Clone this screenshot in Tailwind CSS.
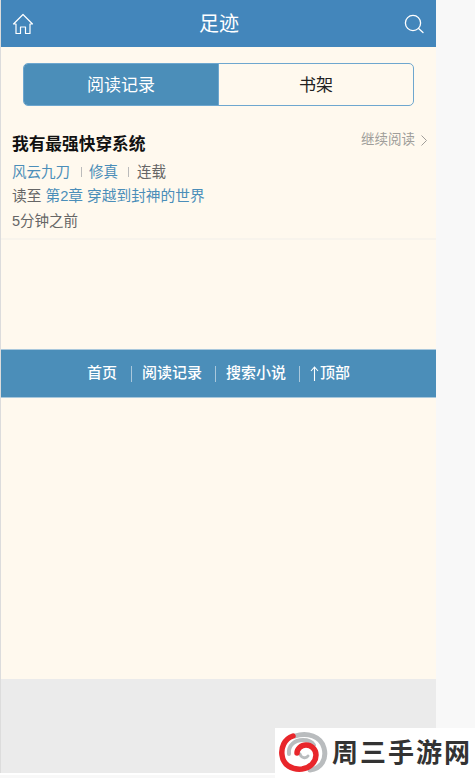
<!DOCTYPE html>
<html lang="zh-CN">
<head>
  <meta charset="UTF-8">
  <meta name="viewport" content="width=device-width, initial-scale=1.0">
  <title>足迹</title>
  <script src="https://cdn.jsdelivr.net/npm/@tailwindcss/browser@4"></script>
</head>
<body class="bg-[#f8f8f8] h-[778px] overflow-hidden relative font-['Liberation_Sans','Noto_Sans_CJK_SC',sans-serif]">

  <div class="w-[436px] h-[773px] border-l border-[#dcdcdc] bg-[#ebebeb] flex flex-col">
    <div class="bg-[#fff9ee] h-[679px] flex flex-col">

      <!-- Header -->
      <header class="h-[47px] bg-[#4386bb] flex items-center justify-between pl-[11px] pr-[12px] text-white">
        <svg class="w-[22px] h-[22px]" viewBox="0 0 22 22" fill="none" stroke="currentColor" stroke-width="1.2" stroke-linejoin="round">
          <path d="M1.5 11 L11 1.5 L20.5 11 H18 V20.5 H13.5 V14 H8.5 V20.5 H4 V11 Z"/>
        </svg>
        <h1 class="text-[20px] leading-none">足迹</h1>
        <svg class="w-[20px] h-[20px]" viewBox="0 0 20 20" fill="none" stroke="currentColor" stroke-width="1.3" stroke-linecap="round">
          <circle cx="9" cy="9" r="7.6"/>
          <path d="M14.6 14.6 L19 18.6"/>
        </svg>
      </header>

      <!-- Tabs -->
      <div class="mt-4 mx-[22px] h-[43px] flex border border-[#6ea7cf] rounded-[5px] overflow-hidden">
        <div class="w-[195px] bg-[#4b8eb9] border-r border-[#6ea7cf] text-white flex items-center justify-center text-[17px] pt-[3px]">阅读记录</div>
        <div class="flex-1 text-[#222] flex items-center justify-center text-[17px] pt-[3px]">书架</div>
      </div>

      <!-- Reading record -->
      <div class="mt-[18px] h-[116px] px-[11px] border-b-2 border-[#f8f4ec] relative">
        <h2 class="pt-[9px] text-[16.7px] leading-6 font-bold text-[#111]">我有最强快穿系统</h2>
        <a class="absolute right-[9px] top-[6px] flex items-center gap-[6px] text-[13.5px] leading-5 text-[#a09e9a]">继续阅读
          <svg class="w-[6px] h-[11px]" viewBox="0 0 6 11" fill="none" stroke="currentColor" stroke-width="1"><path d="M0.5 0.5 L5.5 5.5 L0.5 10.5"/></svg>
        </a>
        <div class="mt-[5px] flex items-center text-[14.5px] leading-5 text-[#666]">
          <span class="text-[#4b8eb9]">风云九刀</span>
          <span class="ml-[11px] mr-[7px] w-px h-[10px] bg-[#bbb]"></span>
          <span class="text-[#4b8eb9]">修真</span>
          <span class="ml-[10px] mr-[8px] w-px h-[10px] bg-[#bbb]"></span>
          <span>连载</span>
        </div>
        <p class="mt-[4px] text-[14.7px] leading-5 text-[#666]">读至 <span class="text-[#4b8eb9]">第2章 穿越到封神的世界</span></p>
        <p class="mt-[5px] text-[14.5px] leading-5 text-[#666]">5分钟之前</p>
      </div>

      <!-- Footer nav -->
      <nav class="mt-[109px] h-[49px] bg-[#4b8eb9] border-y border-[#a9c8dc] flex items-center pl-[86px] text-[15px] font-medium text-white">
        <span class="pr-[14px]">首页</span>
        <span class="w-px h-[16px] bg-[#a9c8dc]"></span>
        <span class="pl-[10px] pr-[13px]">阅读记录</span>
        <span class="w-px h-[16px] bg-[#a9c8dc]"></span>
        <span class="pl-[10px] pr-[13px]">搜索小说</span>
        <span class="w-px h-[16px] bg-[#a9c8dc]"></span>
        <span class="pl-[9px] flex items-center">
          <svg class="w-[11px] h-[15px]" viewBox="0 0 11 15" fill="none" stroke="currentColor" stroke-width="1.1"><path d="M5.5 1 V15 M2 5 L5.5 1 L9 5"/></svg>
          顶部
        </span>
      </nav>
    </div>
  </div>
  <div class="h-[2px] w-[275px] bg-white"></div>

  <!-- Watermark logo -->
  <div class="absolute left-[275px] top-[728px] w-[200px] h-[50px] bg-white flex items-center">
    <svg class="w-[57px] h-[50px] shrink-0" viewBox="0 0 57 50" fill="none" stroke-linecap="round">
      <path d="M20 8 C32 4 46 8 49 20 C52 31 46 41 35 42" stroke="#b9bcbe" stroke-width="5"/>
      <path d="M14 26 C13 17 20 12 28 12 C33 12 37 14 39 17" stroke="#b9bcbe" stroke-width="4"/>
      <path d="M25 26 C26 30 31 31 33 28" stroke="#b9bcbe" stroke-width="3"/>
      <path d="M18 8 C9 11 6 20 7 27 C8 37 17 42 27 41 C35 40 41 34 41 27 C41 21 36 17 31 17 C26 17 22 21 22 25" stroke="#e8262b" stroke-width="5.5"/>
    </svg>
    <span class="text-[26px] leading-none font-bold tracking-[2px] text-[#333] whitespace-nowrap">周三手游网</span>
  </div>
</body>
</html>
